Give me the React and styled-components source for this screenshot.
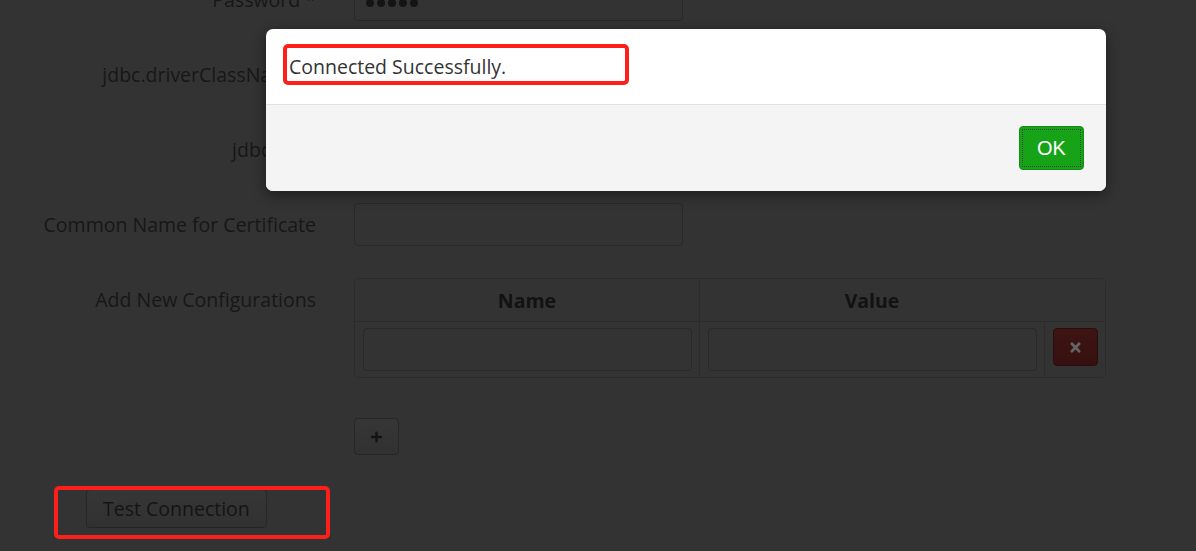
import React from "react";
import styled, { createGlobalStyle } from "styled-components";
import { FaPlus, FaTimes } from "react-icons/fa";

const Global = createGlobalStyle`
  html, body {
    margin: 0;
    background: #333333;
    font-family: "Open Sans", "DejaVu Sans", sans-serif;
    overflow: hidden;
  }
`;

const Page = styled.div`
  position: relative;
  width: 1196px;
  height: 551px;
  overflow: hidden;
`;

const Form = styled.div`
  margin-top: -22px;
`;

const Row = styled.div`
  display: grid;
  grid-template-columns: 316px auto;
  column-gap: 38px;
  align-items: ${(p) => (p.top ? "start" : "center")};
  margin-bottom: ${(p) => p.gap ?? 32}px;
`;

const Label = styled.label`
  text-align: right;
  font-size: 19.5px;
  color: #171717;
  line-height: 43px;
  white-space: nowrap;
`;

const Input = styled.div`
  box-sizing: border-box;
  width: ${(p) => p.w || 329}px;
  height: 43px;
  border: 1px solid #292929;
  border-radius: 4px;
  background: #333333;
  display: flex;
  align-items: flex-start;
  padding: 20px 0 0 11px;
  gap: 3px;
`;

const Dot = styled.span`
  width: 8px;
  height: 8px;
  border-radius: 50%;
  background: #141414;
`;

const Table = styled.table`
  width: 752px;
  border-collapse: separate;
  border-spacing: 0;
  border: 1px solid #2b2b2b;
  border-radius: 4px;
`;

const Th = styled.th`
  height: 42px;
  padding: 0;
  font-size: 19.5px;
  font-weight: 700;
  color: #121212;
  border-left: ${(p) => (p.bare ? "none" : "1px solid #2b2b2b")};
  &:first-child {
    border-left: none;
  }
`;

const Td = styled.td`
  padding: 6px 7px 6px 8px;
  border-top: 1px solid #2b2b2b;
  border-left: 1px solid #2b2b2b;
  vertical-align: top;
  &:first-child {
    border-left: none;
  }
`;

const Btn = styled.button`
  box-sizing: border-box;
  height: ${(p) => p.h || 38}px;
  padding: 0 ${(p) => p.px || 16}px;
  border: 1px solid ${(p) => (p.danger ? "#2a0c0c" : "#262626")};
  border-radius: 4px;
  background: ${(p) =>
    p.danger
      ? "linear-gradient(#3e1414, #361010)"
      : "linear-gradient(#363636, #313131)"};
  color: ${(p) => (p.danger ? "#646464" : "#141414")};
  font-family: "Open Sans", sans-serif;
  font-size: 19.5px;
  display: inline-flex;
  align-items: center;
  justify-content: center;
`;

const AddRow = styled.div`
  padding-left: 354px;
  margin-top: 40px;
`;

const FooterRow = styled.div`
  padding-left: 86px;
  margin-top: 34px;
`;

const Dialog = styled.div`
  position: absolute;
  left: 266px;
  top: 29px;
  width: 840px;
  border-radius: 7px;
  overflow: hidden;
  background: #fff;
  box-shadow: 0 4px 14px rgba(0, 0, 0, 0.45);
`;

const DialogBody = styled.div`
  height: 75px;
  padding: 0 23px;
  display: flex;
  align-items: center;
  font-size: 19.5px;
  color: #333;
  border-bottom: 1px solid #e2e2e2;
`;

const DialogFooter = styled.div`
  background: #f4f4f4;
  height: 86px;
  padding: 21px 22px 0 0;
  box-sizing: border-box;
  display: flex;
  justify-content: flex-end;
  align-items: flex-start;
`;

const OkBtn = styled.button`
  width: 65px;
  height: 44px;
  border: 1px solid #128c12;
  border-radius: 4px;
  background: #17a317;
  color: #fff;
  font-family: "Liberation Sans", Arial, sans-serif;
  font-size: 20px;
  outline: 1px dotted #1c4d1c;
  outline-offset: -4px;
`;

const Mark = styled.div`
  position: absolute;
  box-sizing: border-box;
  border: 4px solid #ff1f1a;
  border-radius: 5px;
`;

export default function App() {
  return (
    <Page>
      <Global />
      <Form>
        <Row>
          <Label>Password *</Label>
          <Input>
            {[0, 1, 2, 3, 4].map((i) => (
              <Dot key={i} />
            ))}
          </Input>
        </Row>
        <Row>
          <Label>jdbc.driverClassName *</Label>
          <Input />
        </Row>
        <Row>
          <Label>jdbc.url *</Label>
          <Input />
        </Row>
        <Row>
          <Label>Common Name for Certificate</Label>
          <Input />
        </Row>
        <Row top gap={0}>
          <Label>Add New Configurations</Label>
          <Table>
            <thead>
              <tr>
                <Th style={{ width: 344 }}>Name</Th>
                <Th style={{ width: 344 }}>Value</Th>
                <Th bare />
              </tr>
            </thead>
            <tbody>
              <tr>
                <Td>
                  <Input />
                </Td>
                <Td>
                  <Input />
                </Td>
                <Td>
                  <Btn danger px={0} style={{ width: 45 }}>
                    <FaTimes size={15} />
                  </Btn>
                </Td>
              </tr>
            </tbody>
          </Table>
        </Row>
        <AddRow>
          <Btn px={0} style={{ width: 45 }} h={37}>
            <FaPlus size={16} />
          </Btn>
        </AddRow>
        <FooterRow>
          <Btn h={39} px={16}>Test Connection</Btn>
        </FooterRow>
      </Form>

      <Dialog>
        <DialogBody>Connected Successfully.</DialogBody>
        <DialogFooter>
          <OkBtn>OK</OkBtn>
        </DialogFooter>
      </Dialog>

      <Mark style={{ left: 283, top: 44, width: 346, height: 41 }} />
      <Mark style={{ left: 54, top: 486, width: 276, height: 53 }} />
    </Page>
  );
}
